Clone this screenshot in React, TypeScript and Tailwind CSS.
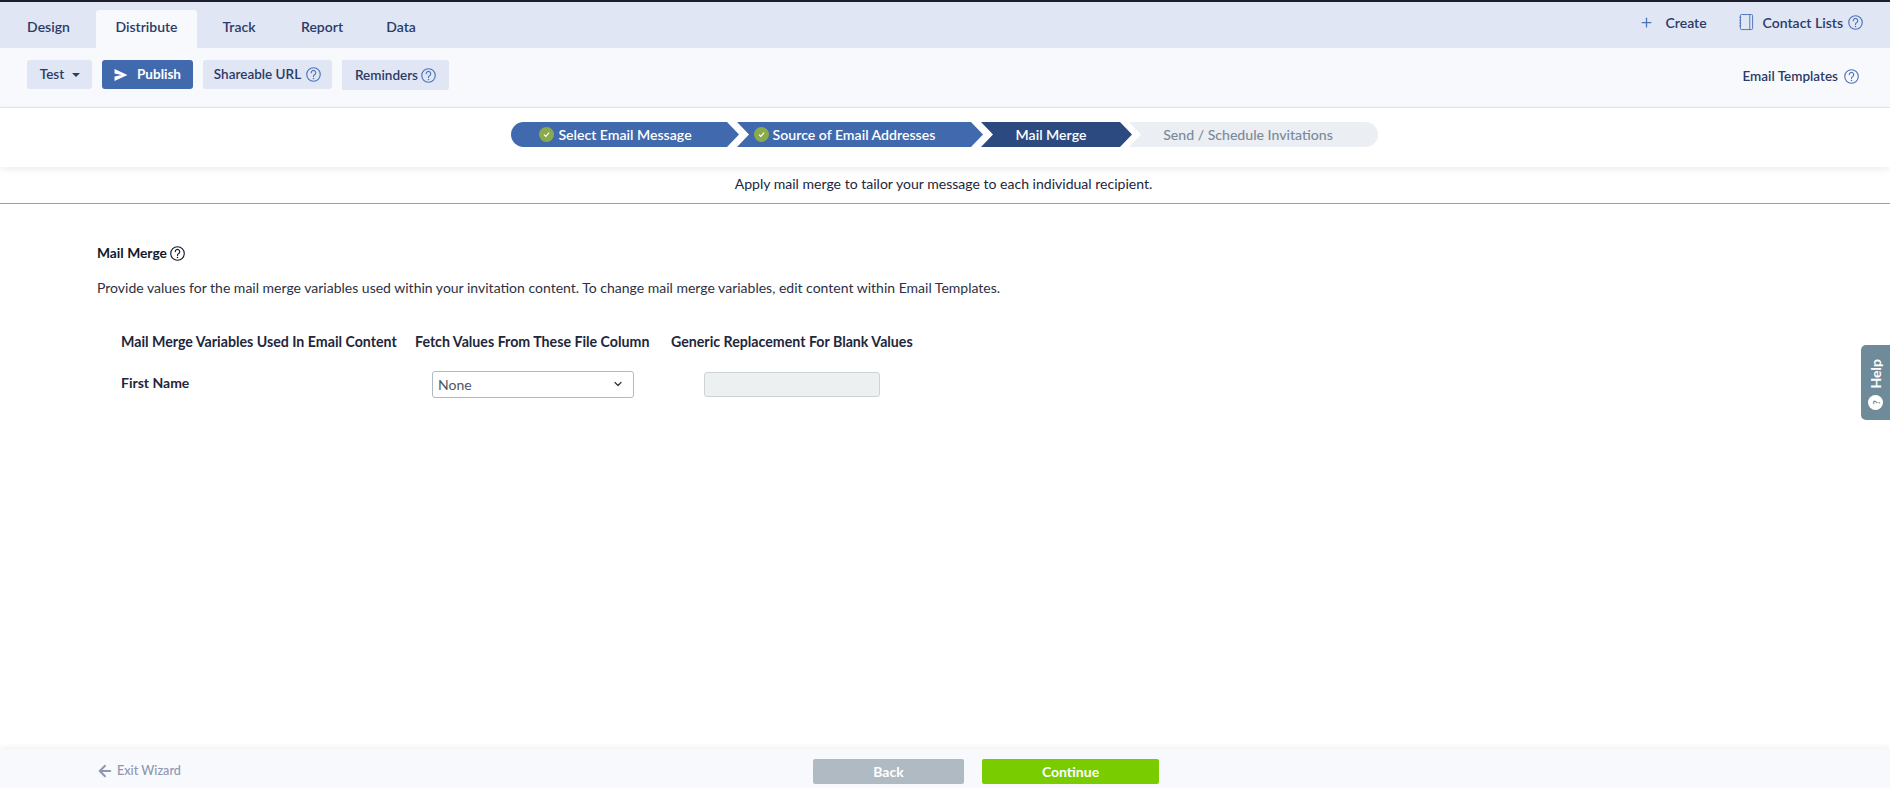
import { ArrowLeft, ChevronDown, Plus } from 'lucide-react';

function HelpIcon({ className }: { className?: string }) {
  return (
    <svg viewBox="0 0 16 16" fill="none" stroke="currentColor" className={className}>
      <circle cx="8" cy="8" r="7.2" strokeWidth="1.2" />
      <path d="M5.6 6.1a2.4 2.4 0 1 1 3.7 2c-.9.5-1.3 1-1.3 1.9" strokeWidth="1.2" strokeLinecap="round" />
      <circle cx="8" cy="12.2" r=".8" fill="currentColor" stroke="none" />
    </svg>
  );
}

function CheckBadge() {
  return (
    <span className="flex h-[15px] w-[15px] shrink-0 items-center justify-center rounded-full bg-[#8aab4c]">
      <svg viewBox="0 0 10 10" className="h-[9px] w-[9px]" fill="none" stroke="white" strokeWidth="1.3">
        <path d="M2.2 5.2 4.2 7.1 7.9 3" />
      </svg>
    </span>
  );
}

function NotebookIcon() {
  return (
    <svg viewBox="0 0 16 18" className="h-[17px] w-[15px] text-[#4b73b5]" fill="none" stroke="currentColor" strokeWidth="1">
      <rect x="1.5" y=".5" width="13" height="16" rx="1" />
      <path d="M11.5.5v16M.3 3.5h2M.3 6.5h2M.3 9.5h2M.3 12.5h2" />
    </svg>
  );
}

function PlaneIcon() {
  return (
    <svg viewBox="0 0 14 13" className="h-[12px] w-[14px]" fill="white">
      <path d="M0 0 14 6.5 0 13 0 8 7.5 6.5 0 5Z" />
    </svg>
  );
}

const tabs = ['Design', 'Distribute', 'Track', 'Report', 'Data'];

export default function App() {
  return (
    <div className="relative flex h-[788px] flex-col overflow-hidden bg-white font-['Lato',sans-serif] text-[13.5px] text-[#2b2f4a]">
      <div className="h-[2px] bg-[#1c1f2b]" />

      <div className="flex h-[46px] items-end justify-between bg-[#e0e6f3] pl-[1px] pr-[27px] text-[14px] font-semibold text-[#2b3a67]">
        <div className="flex items-end">
          {tabs.map((tab) => {
            const widths: Record<string, string> = {
              Design: 'w-[95px]',
              Distribute: 'w-[101px] rounded-t-[3px] bg-[#f8f9fc]',
              Track: 'w-[84px]',
              Report: 'w-[82px]',
              Data: 'w-[76px]',
            };
            return (
              <div key={tab} className={`flex h-[38px] items-center justify-center pb-[5px] ${widths[tab]}`}>
                {tab}
              </div>
            );
          })}
        </div>
        <div className="flex h-full items-center gap-[32px] pb-[5px]">
          <div className="flex items-center gap-[12px]">
            <Plus className="h-[15px] w-[15px] text-[#4b73b5]" strokeWidth={2} />
            <span>Create</span>
          </div>
          <div className="flex items-center gap-[9px]">
            <NotebookIcon />
            <span className="flex items-center gap-[5px]">
              Contact Lists
              <HelpIcon className="h-[15px] w-[15px] text-[#4b73b5]" />
            </span>
          </div>
        </div>
      </div>

      <div className="flex h-[60px] items-center justify-between border-b border-[#e5e8f1] bg-[#f8f9fc] pb-[6px] pl-[27px] pr-[31px] font-semibold text-[#2b3a67]">
        <div className="flex items-center gap-[10px]">
          <div className="flex h-[29px] w-[65px] items-center justify-center gap-[8px] rounded-[3px] bg-[#e0e6f3] pl-[1px]">
            Test
            <span className="h-0 w-0 border-x-[4px] border-t-[4px] border-x-transparent border-t-[#2b3a67]" />
          </div>
          <div className="flex h-[29px] w-[91px] items-center justify-center gap-[9px] rounded-[3px] bg-[#4169ae] font-bold text-white">
            <PlaneIcon />
            Publish
          </div>
          <div className="flex h-[29px] w-[129px] items-center justify-center gap-[5px] rounded-[3px] bg-[#e0e6f3]">
            Shareable URL
            <HelpIcon className="h-[15px] w-[15px] text-[#4b73b5]" />
          </div>
          <div className="flex h-[30px] w-[107px] items-center justify-center gap-[3px] rounded-r-[3px] bg-[#e0e6f3] pt-[1px]">
            Reminders
            <HelpIcon className="h-[15px] w-[15px] text-[#4b73b5]" />
          </div>
        </div>
        <div className="flex items-center gap-[6px] pt-[3px]">
          Email Templates
          <HelpIcon className="h-[15px] w-[15px] text-[#4b73b5]" />
        </div>
      </div>

      <div className="relative z-10 flex h-[59px] shrink-0 items-start bg-white pl-[511px] pt-[14px] shadow-[0_2px_8px_rgba(0,0,0,0.08)]">
        <div className="flex h-[25px] w-[867px] text-[14.1px] font-semibold text-white">
          <div className="flex w-[228px] items-center justify-center gap-[4px] rounded-l-full bg-[#4169ae] pr-[19px] [clip-path:polygon(0_0,216px_0,228px_50%,216px_100%,0_100%)]">
            <CheckBadge />
            Select Email Message
          </div>
          <div className="-ml-[2px] flex w-[246px] items-center justify-center gap-[4px] bg-[#4169ae] pr-[31px] [clip-path:polygon(0_0,234px_0,246px_50%,234px_100%,0_100%,12px_50%)]">
            <CheckBadge />
            Source of Email Addresses
          </div>
          <div className="-ml-[2px] flex w-[151px] items-center justify-center bg-[#2c4a7f] pr-[11px] [clip-path:polygon(0_0,139px_0,151px_50%,139px_100%,0_100%,12px_50%)]">
            Mail Merge
          </div>
          <div className="-ml-[3px] flex w-[249px] items-center justify-center rounded-r-full bg-[#ebeef2] pr-[11px] font-medium text-[#7b8a9a] [clip-path:polygon(0_0,100%_0,100%_100%,0_100%,12px_50%)]">
            Send / Schedule Invitations
          </div>
        </div>
      </div>

      <div className="flex h-[37px] shrink-0 items-center justify-center border-b border-[#8fa0b0] pb-[3px] pr-[3px] text-[14.05px] text-[#23263b]">
        Apply mail merge to tailor your message to each individual recipient.
      </div>

      <main className="flex-1 pl-[97px] pt-[39px]">
        <div className="flex items-center gap-[3px] text-[13.8px] font-bold text-[#15172a]">
          Mail Merge
          <HelpIcon className="h-[15px] w-[15px]" />
        </div>
        <p className="mt-[14px] text-[14px] leading-[20px] text-[#2d3045]">
          Provide values for the mail merge variables used within your invitation content. To change mail merge variables, edit content within Email Templates.
        </p>

        <div className="mt-[34px] grid grid-cols-[294px_256px_1fr] pl-[24px] text-[14.2px] font-bold text-[#23263b]">
          <div className="whitespace-nowrap leading-[20px]">Mail Merge Variables Used In Email Content</div>
          <div className="whitespace-nowrap leading-[20px]">Fetch Values From These File Column</div>
          <div className="whitespace-nowrap leading-[20px]">Generic Replacement For Blank Values</div>
          <div className="mt-[18px] text-[14px] leading-[26px]">First Name</div>
          <div className="mt-[19px] pl-[17px]">
            <div className="flex h-[27px] w-[202px] items-center justify-between rounded-[3px] border border-[#b0bac3] pl-[5px] pr-[9px] text-[14px] font-normal text-[#4b5563]">
              None
              <ChevronDown className="h-[12px] w-[12px] text-[#2b3a4a]" strokeWidth={2.5} />
            </div>
          </div>
          <div className="mt-[20px] pl-[33px]">
            <div className="h-[25px] w-[176px] rounded-[3px] border border-[#ccd3d8] bg-[#edf0f0]" />
          </div>
        </div>
      </main>

      <footer className="relative flex h-[39px] shrink-0 items-center justify-center bg-[#f8f9fc] pt-[6px] shadow-[0_-2px_6px_rgba(0,0,0,0.06)]">
        <div className="absolute left-[96px] flex items-center gap-[3px] text-[12.6px] font-medium text-[#8f95b2]">
          <ArrowLeft className="h-[18px] w-[18px]" strokeWidth={2.5} />
          Exit Wizard
        </div>
        <div className="flex items-center gap-[18px] pl-[82px] text-[14px] font-bold text-white">
          <div className="flex h-[25px] w-[151px] items-center justify-center rounded-[2px] bg-[#b0bac3]">Back</div>
          <div className="flex h-[25px] w-[177px] items-center justify-center rounded-[2px] bg-[#78cc00]">Continue</div>
        </div>
      </footer>

      <div className="absolute right-0 top-[345px] flex h-[75px] w-[29px] flex-col items-center justify-end gap-[7px] rounded-l-[5px] bg-[#6f8a99] pb-[10px] text-white">
        <span className="rotate-180 text-[14px] font-bold leading-none [writing-mode:vertical-rl]">Help</span>
        <span className="flex h-[15px] w-[15px] -rotate-90 items-center justify-center rounded-full bg-white text-[10px] font-bold leading-none text-[#6f8a99]">
          ?
        </span>
      </div>
    </div>
  );
}
